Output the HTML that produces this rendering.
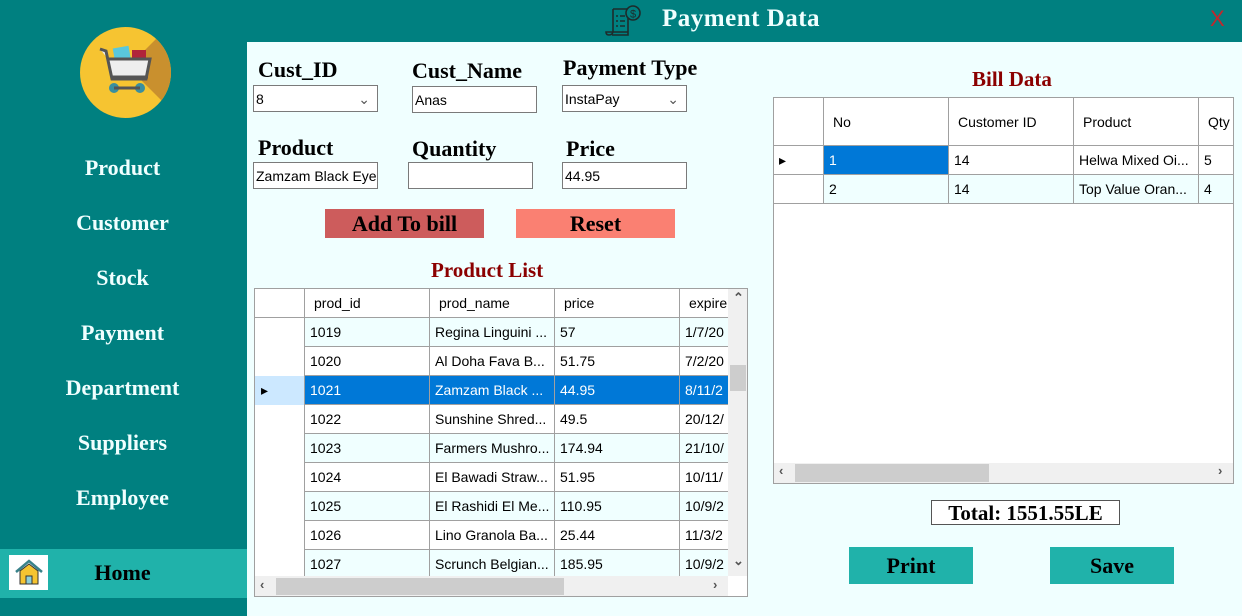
<!DOCTYPE html>
<html><head><meta charset="utf-8"><style>
*{box-sizing:border-box;margin:0;padding:0}
body{width:1242px;height:616px;overflow:hidden;background:#f0ffff;position:relative;font-family:"Liberation Sans",sans-serif}
.a{position:absolute}
.serif{font-family:"Liberation Serif",serif;font-weight:bold}
.side{left:0;top:0;width:247px;height:616px;background:#008080}
.top{left:0;top:0;width:1242px;height:42px;background:#008080}
.nav{left:0;width:245px;text-align:center;color:#f0ffff;font-size:22px}
.lbl{font-size:22px;color:#000}
.box{background:#fff;border:1px solid #7a7a7a;font-size:14px;padding:5px 2px;height:27px;white-space:nowrap;overflow:hidden}
.grid{background:#fff;border:1px solid #a0a0a0;overflow:hidden}
.c{position:absolute;font-size:14px;white-space:nowrap;overflow:hidden;border-right:1px solid #a0a0a0;border-bottom:1px solid #a0a0a0;padding-left:5px}
.btn{text-align:center;font-size:22px;color:#000}
.sa{position:absolute;font-size:13px;color:#555;font-weight:bold}
</style></head><body>
<div class="a top"></div>
<div class="a side"></div>
<svg class="a" style="left:604px;top:3px" width="40" height="36" viewBox="0 0 40 36" fill="none" stroke="#1d2b2b" stroke-width="1.6">
<path d="M9 6h15v26H8"/><path d="M9 6v22c0 3-2 4-4 4s-3-1-3-3h22"/><circle cx="29" cy="10" r="7" fill="#008080"/><text x="26" y="14.5" font-size="11" fill="#1d2b2b" stroke="none" font-family="Liberation Sans">$</text>
<path d="M12 13h2M16 13h5M12 18h2M16 18h5M12 23h2M16 23h5"/></svg>
<div class="a serif" style="left:662px;top:5px;font-size:25px;color:#f0ffff;letter-spacing:0.5px">Payment Data</div>
<div class="a" style="left:1210px;top:6px;font-size:22px;color:#c0282d">X</div>
<div class="a" style="left:80px;top:27px;width:91px;height:91px;border-radius:50%;background:#f6c431;overflow:hidden">
<div class="a" style="left:48px;top:40px;width:80px;height:80px;background:#c9902e;transform:rotate(-45deg);transform-origin:0 0"></div>
<svg class="a" style="left:12px;top:18px" width="70" height="55" viewBox="0 0 70 55"><rect x="22" y="2" width="16" height="18" fill="#5ac8dc" transform="rotate(-10 30 10)"/><rect x="40" y="5" width="14" height="18" fill="#b0243a"/><path d="M8 4l6 2 6 28h34l4-20H16" fill="#eee" stroke="#555" stroke-width="3"/><path d="M20 32h36" stroke="#555" stroke-width="3"/><circle cx="22" cy="43" r="5" fill="#3a8fa0"/><circle cx="48" cy="43" r="5" fill="#3a8fa0"/><path d="M22 43h26" stroke="#555" stroke-width="3"/></svg></div>
<div class="a nav serif" style="top:155px">Product</div>
<div class="a nav serif" style="top:210px">Customer</div>
<div class="a nav serif" style="top:265px">Stock</div>
<div class="a nav serif" style="top:320px">Payment</div>
<div class="a nav serif" style="top:375px">Department</div>
<div class="a nav serif" style="top:430px">Suppliers</div>
<div class="a nav serif" style="top:485px">Employee</div>
<div class="a" style="left:0;top:549px;width:247px;height:49px;background:#20b2aa"></div>
<div class="a" style="left:9px;top:555px;width:39px;height:35px;background:#fff"></div>
<svg class="a" style="left:14px;top:559px" width="30" height="27" viewBox="0 0 30 27"><path d="M2 13L15 2l13 11" fill="none" stroke="#39828a" stroke-width="2.5"/><path d="M6 12v13h18V12L15 5z" fill="#f6c431" stroke="#333" stroke-width="1"/><rect x="12" y="17" width="6" height="8" fill="#8fd0d8" stroke="#333"/></svg>
<div class="a serif" style="left:0;width:245px;top:560px;text-align:center;font-size:22px;color:#000">Home</div>

<div class="a serif lbl" style="left:258px;top:57px">Cust_ID</div>
<div class="a serif lbl" style="left:412px;top:58px">Cust_Name</div>
<div class="a serif lbl" style="left:563px;top:55px">Payment Type</div>
<div class="a box" style="left:253px;top:85px;width:125px">8<span style="float:right;color:#555;margin-right:5px">&#8964;</span></div>
<div class="a box" style="left:412px;top:86px;width:125px">Anas</div>
<div class="a box" style="left:562px;top:85px;width:125px">InstaPay<span style="float:right;color:#555;margin-right:5px">&#8964;</span></div>
<div class="a serif lbl" style="left:258px;top:135px">Product</div>
<div class="a serif lbl" style="left:412px;top:136px">Quantity</div>
<div class="a serif lbl" style="left:566px;top:136px">Price</div>
<div class="a box" style="left:253px;top:162px;width:125px">Zamzam Black Eyed</div>
<div class="a box" style="left:408px;top:162px;width:125px"></div>
<div class="a box" style="left:562px;top:162px;width:125px">44.95</div>
<div class="a btn serif" style="left:325px;top:209px;width:159px;height:29px;background:#cd5c5c;line-height:30px">Add To bill</div>
<div class="a btn serif" style="left:516px;top:209px;width:159px;height:29px;background:#fa8072;line-height:30px">Reset</div>
<div class="a serif" style="left:431px;top:258px;font-size:21px;color:#8b0000">Product List</div>

<div class="a grid" style="left:254px;top:288px;width:494px;height:309px">
<div style="position:relative">
<div class="c" style="left:0;top:0;width:50px;height:29px"></div>
<div class="c" style="left:50px;top:0;width:125px;height:29px;line-height:29px;padding-left:9px">prod_id</div>
<div class="c" style="left:175px;top:0;width:125px;height:29px;line-height:29px;padding-left:9px">prod_name</div>
<div class="c" style="left:300px;top:0;width:125px;height:29px;line-height:29px;padding-left:9px">price</div>
<div class="c" style="left:425px;top:0;width:48px;height:29px;line-height:29px;padding-left:9px;border-right:0">expire</div>
</div>
<div id="pl"></div>
<div class="a" style="left:473px;top:0;width:20px;height:287px;background:#f0f0f0"><div class="a" style="left:2px;top:76px;width:16px;height:26px;background:#cdcdcd"></div><div class="sa" style="left:5px;top:1px">&#8963;</div><div class="sa" style="left:5px;top:264px">&#8964;</div></div>
<div class="a" style="left:0;top:287px;width:473px;height:21px;background:#f0f0f0"><div class="a" style="left:21px;top:2px;width:288px;height:17px;background:#cdcdcd"></div><div class="sa" style="left:5px;top:1px">&lsaquo;</div><div class="sa" style="left:458px;top:1px">&rsaquo;</div></div>
</div>

<div class="a serif" style="left:972px;top:67px;font-size:21px;color:#8b0000">Bill Data</div>
<div class="a grid" style="left:773px;top:97px;width:461px;height:387px">
<div class="c" style="left:0;top:0;width:50px;height:48px"></div>
<div class="c" style="left:50px;top:0;width:125px;height:48px;line-height:48px;padding-left:9px">No</div>
<div class="c" style="left:175px;top:0;width:125px;height:48px;line-height:48px;padding-left:9px">Customer ID</div>
<div class="c" style="left:300px;top:0;width:125px;height:48px;line-height:48px;padding-left:9px">Product</div>
<div class="c" style="left:425px;top:0;width:40px;height:48px;line-height:48px;padding-left:9px;border-right:0">Qty</div>
<div class="c" style="left:0;top:48px;width:50px;height:29px;line-height:29px">&#9656;</div>
<div class="c" style="left:50px;top:48px;width:125px;height:29px;line-height:29px;background:#0078d7;color:#fff">1</div>
<div class="c" style="left:175px;top:48px;width:125px;height:29px;line-height:29px">14</div>
<div class="c" style="left:300px;top:48px;width:125px;height:29px;line-height:29px">Helwa Mixed Oi...</div>
<div class="c" style="left:425px;top:48px;width:40px;height:29px;line-height:29px;border-right:0">5</div>
<div class="c" style="left:0;top:77px;width:50px;height:29px;background:#fff"></div>
<div class="c" style="left:50px;top:77px;width:125px;height:29px;line-height:29px;background:#f0ffff">2</div>
<div class="c" style="left:175px;top:77px;width:125px;height:29px;line-height:29px;background:#f0ffff">14</div>
<div class="c" style="left:300px;top:77px;width:125px;height:29px;line-height:29px;background:#f0ffff">Top Value Oran...</div>
<div class="c" style="left:425px;top:77px;width:40px;height:29px;line-height:29px;background:#f0ffff;border-right:0">4</div>
<div class="a" style="left:0;top:365px;width:459px;height:20px;background:#f0f0f0"><div class="a" style="left:21px;top:1px;width:194px;height:18px;background:#cdcdcd"></div><div class="sa" style="left:5px;top:0px">&lsaquo;</div><div class="sa" style="left:444px;top:0px">&rsaquo;</div></div>
</div>
<div class="a serif" style="left:931px;top:500px;width:189px;height:25px;border:1px solid #555;background:#fff;font-size:21px;text-align:center;line-height:24px">Total: 1551.55LE</div>
<div class="a btn serif" style="left:849px;top:547px;width:124px;height:37px;background:#20b2aa;line-height:37px">Print</div>
<div class="a btn serif" style="left:1050px;top:547px;width:124px;height:37px;background:#20b2aa;line-height:37px">Save</div>
<script>
var d=[["1019","Regina Linguini ...","57","1/7/20"],["1020","Al Doha Fava B...","51.75","7/2/20"],["1021","Zamzam Black ...","44.95","8/11/2"],["1022","Sunshine Shred...","49.5","20/12/"],["1023","Farmers Mushro...","174.94","21/10/"],["1024","El Bawadi Straw...","51.95","10/11/"],["1025","El Rashidi El Me...","110.95","10/9/2"],["1026","Lino Granola Ba...","25.44","11/3/2"],["1027","Scrunch Belgian...","185.95","10/9/2"]];
var h="";d.forEach(function(r,i){var t=29+i*29,s=i==2,bg=s?"#0078d7":(i%2==0?"#f0ffff":"#fff"),col=s?"#fff":"#000";
h+='<div class="c" style="left:0;top:'+t+'px;width:50px;height:29px;line-height:29px;padding-left:6px;border-bottom:0;background:'+(s?"#cce8ff":"#fff")+'">'+(s?"&#9656;":"")+'</div>';
var L=[50,175,300,425],W=[125,125,125,48];for(var j=0;j<4;j++)h+='<div class="c" style="left:'+L[j]+'px;top:'+t+'px;width:'+W[j]+'px;height:29px;line-height:29px;background:'+bg+';color:'+col+(j==3?';border-right:0':'')+'">'+r[j]+'</div>';});
document.getElementById("pl").innerHTML=h;
</script>
</body></html>
